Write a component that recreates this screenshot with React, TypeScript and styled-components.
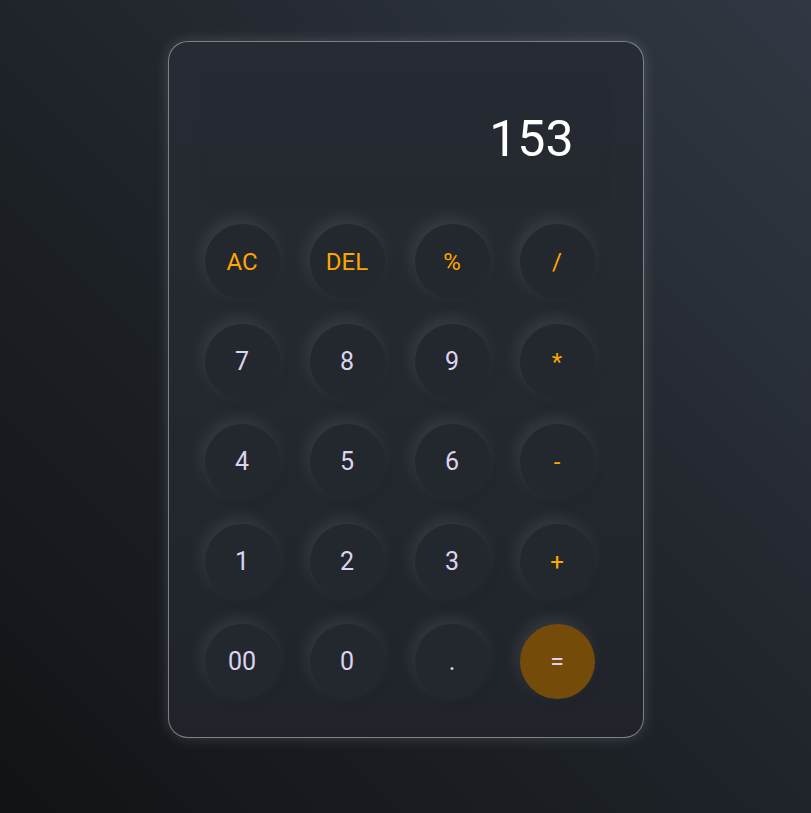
import React from "react";
import styled, { createGlobalStyle } from "styled-components";

const Global = createGlobalStyle`
  html, body { margin: 0; padding: 0; }
  body {
    min-height: 100vh;
    background: linear-gradient(45deg, #111316 0%, #1f242a 50%, #323843 100%);
    font-family: Roboto, "Liberation Sans", sans-serif;
  }
`;

const Page = styled.div`
  min-height: 813px;
  box-sizing: border-box;
  padding-top: 41px;
  display: flex;
  justify-content: center;
  align-items: flex-start;
`;

const Card = styled.div`
  width: 476px;
  box-sizing: border-box;
  padding: 37px 38px 38px 36px;
  border: 1px solid rgba(200, 200, 210, 0.55);
  border-radius: 20px;
  background: linear-gradient(180deg, #272c34 0%, #20242a 100%);
  box-shadow: 0 0 14px rgba(255, 255, 255, 0.16);
  display: flex;
  flex-direction: column;
  gap: 25px;
`;

const Display = styled.div`
  height: 120px;
  display: flex;
  align-items: center;
  justify-content: flex-end;
  padding: 0 31px;
  background: rgba(0, 0, 0, 0.025);
  box-shadow: 0 0 8px rgba(0, 0, 0, 0.08);
  color: #ffffff;
  font-size: 50px;
  font-weight: 400;
`;

const Grid = styled.div`
  display: grid;
  grid-template-columns: repeat(4, 75px);
  column-gap: 30px;
  row-gap: 25px;
`;

const Key = styled.button<{ $kind: "op" | "num" | "eq" }>`
  width: 75px;
  height: 75px;
  border: none;
  border-radius: 50%;
  padding: 0;
  margin: 0;
  font-family: Roboto, "Liberation Sans", sans-serif;
  font-size: ${(p) => (p.$kind === "op" ? "24px" : "25px")};
  font-weight: 400;
  color: ${(p) => (p.$kind === "op" ? "#ffa500" : "#ddd3ee")};
  background: ${(p) => (p.$kind === "eq" ? "#754b09" : "#23272e")};
  box-shadow: -3px -5px 16px rgba(255, 255, 255, 0.1),
    3px 4px 10px rgba(0, 0, 0, 0.08);
  display: flex;
  align-items: center;
  justify-content: center;
  cursor: pointer;
`;

const keys: { label: string; kind: "op" | "num" | "eq" }[] = [
  { label: "AC", kind: "op" },
  { label: "DEL", kind: "op" },
  { label: "%", kind: "op" },
  { label: "/", kind: "op" },
  { label: "7", kind: "num" },
  { label: "8", kind: "num" },
  { label: "9", kind: "num" },
  { label: "*", kind: "op" },
  { label: "4", kind: "num" },
  { label: "5", kind: "num" },
  { label: "6", kind: "num" },
  { label: "-", kind: "op" },
  { label: "1", kind: "num" },
  { label: "2", kind: "num" },
  { label: "3", kind: "num" },
  { label: "+", kind: "op" },
  { label: "00", kind: "num" },
  { label: "0", kind: "num" },
  { label: ".", kind: "num" },
  { label: "=", kind: "eq" },
];

export default function App() {
  return (
    <>
      <Global />
      <Page>
        <Card>
          <Display>153</Display>
          <Grid>
            {keys.map((k) => (
              <Key key={k.label} $kind={k.kind}>
                {k.label}
              </Key>
            ))}
          </Grid>
        </Card>
      </Page>
    </>
  );
}
